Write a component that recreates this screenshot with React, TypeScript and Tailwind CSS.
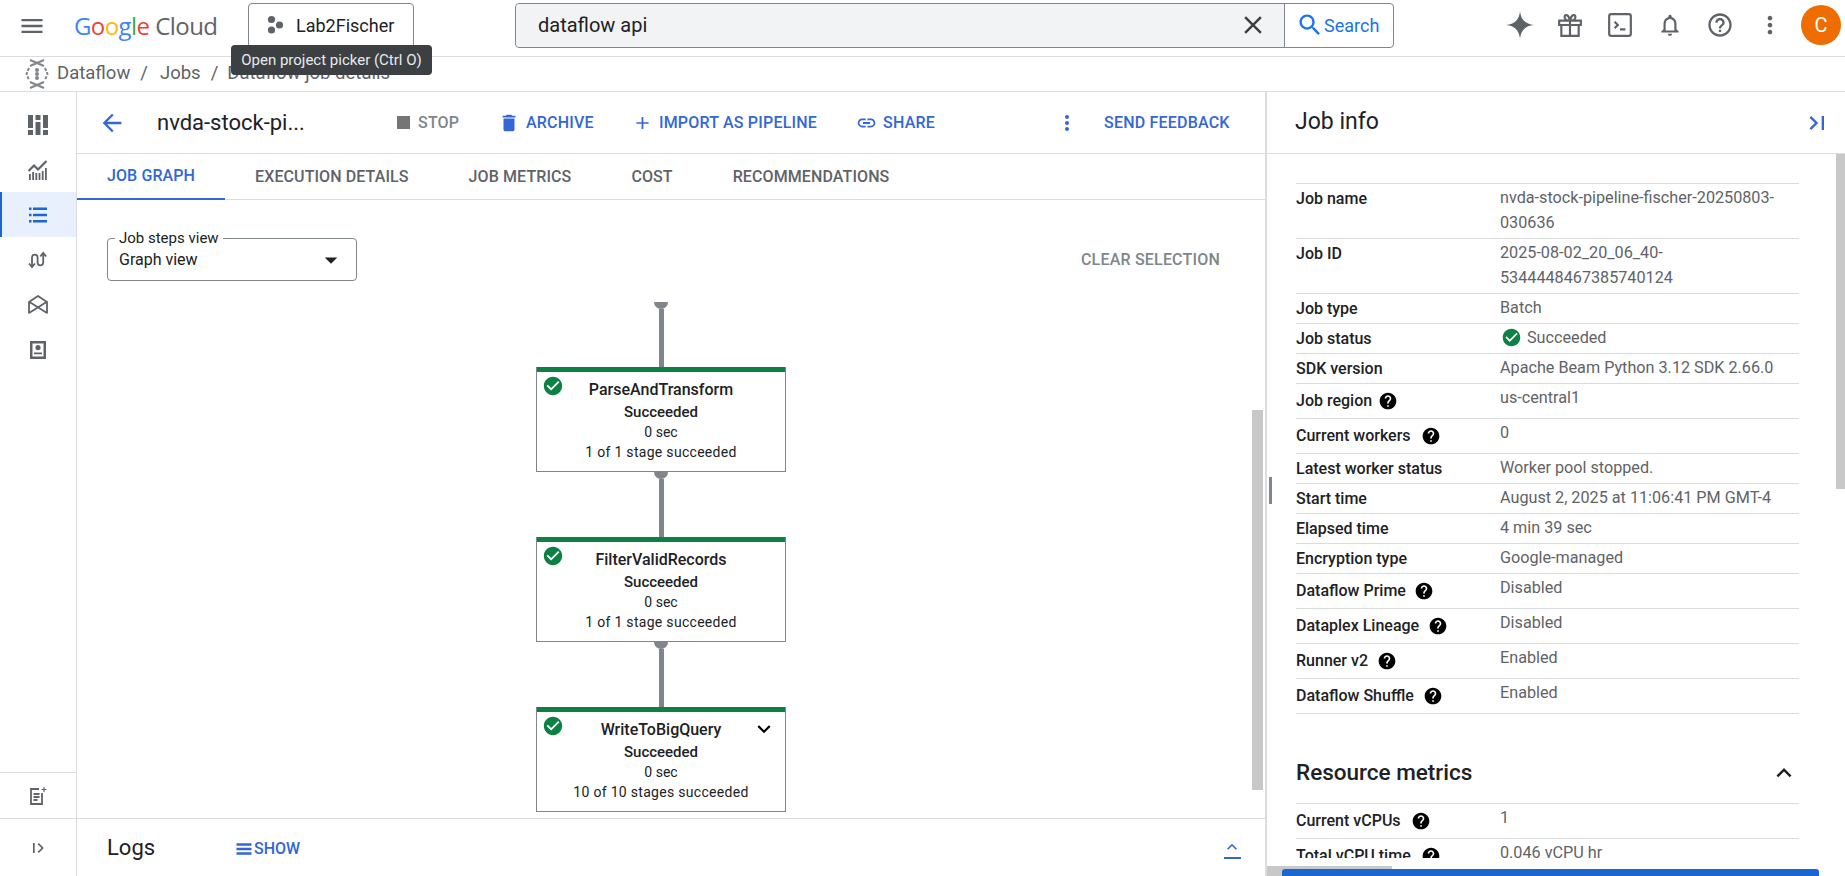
import React from "react";

const GRAY = "#5f6368";
const BLUE = "#3367d6";

type IconProps = { d: string; className?: string; fill?: string };

const Icon = ({ d, className = "w-6 h-6", fill = "currentColor" }: IconProps) => (
  <svg viewBox="0 0 24 24" className={className} fill={fill}>
    <path d={d} />
  </svg>
);

const paths = {
  menu: "M3 18h18v-2H3v2zm0-5h18v-2H3v2zm0-7v2h18V6H3z",
  back: "M20 11H7.83l5.59-5.59L12 4l-8 8 8 8 1.41-1.41L7.83 13H20v-2z",
  trash: "M6 19c0 1.1.9 2 2 2h8c1.1 0 2-.9 2-2V7H6v12zM19 4h-3.5l-1-1h-5l-1 1H5v2h14V4z",
  add: "M19 13h-6v6h-2v-6H5v-2h6V5h2v6h6v2z",
  link: "M3.9 12c0-1.71 1.39-3.1 3.1-3.1h4V7H7c-2.76 0-5 2.24-5 5s2.24 5 5 5h4v-1.9H7c-1.71 0-3.1-1.39-3.1-3.1zM8 13h8v-2H8v2zm9-6h-4v1.9h4c1.71 0 3.1 1.39 3.1 3.1s-1.39 3.1-3.1 3.1h-4V17h4c2.76 0 5-2.24 5-5s-2.24-5-5-5z",
  dots: "M12 8c1.1 0 2-.9 2-2s-.9-2-2-2-2 .9-2 2 .9 2 2 2zm0 2c-1.1 0-2 .9-2 2s.9 2 2 2 2-.9 2-2-.9-2-2-2zm0 6c-1.1 0-2 .9-2 2s.9 2 2 2 2-.9 2-2-.9-2-2-2z",
  close: "M19 6.41 17.59 5 12 10.59 6.41 5 5 6.41 10.59 12 5 17.59 6.41 19 12 13.41 17.59 19 19 17.59 13.41 12z",
  search: "M15.5 14h-.79l-.28-.27C15.41 12.59 16 11.11 16 9.5 16 5.91 13.09 3 9.5 3S3 5.91 3 9.5 5.91 16 9.5 16c1.61 0 3.09-.59 4.23-1.57l.27.28v.79l5 4.99L20.49 19l-4.99-5zm-6 0C7.01 14 5 11.99 5 9.5S7.01 5 9.5 5 14 7.01 14 9.5 11.99 14 9.5 14z",
  check: "M12 2C6.48 2 2 6.48 2 12s4.48 10 10 10 10-4.48 10-10S17.52 2 12 2zm-2 15l-5-5 1.41-1.41L10 14.17l7.59-7.59L19 8l-9 9z",
  help: "M12 2C6.48 2 2 6.48 2 12s4.48 10 10 10 10-4.48 10-10S17.52 2 12 2zm1 17h-2v-2h2v2zm2.07-7.75l-.9.92C13.45 12.9 13 13.5 13 15h-2v-.5c0-1.1.45-2.1 1.17-2.83l1.24-1.26c.37-.36.59-.86.59-1.41 0-1.1-.9-2-2-2s-2 .9-2 2H8c0-2.21 1.79-4 4-4s4 1.79 4 4c0 .88-.36 1.68-.93 2.25z",
  helpOutline: "M11 18h2v-2h-2v2zm1-16C6.48 2 2 6.48 2 12s4.48 10 10 10 10-4.48 10-10S17.52 2 12 2zm0 18c-4.41 0-8-3.59-8-8s3.59-8 8-8 8 3.59 8 8-3.59 8-8 8zm0-14c-2.21 0-4 1.79-4 4h2c0-1.1.9-2 2-2s2 .9 2 2c0 2-3 1.75-3 5h2c0-2.25 3-2.5 3-5 0-2.21-1.79-4-4-4z",
  bell: "M12 22c1.1 0 2-.9 2-2h-4c0 1.1.9 2 2 2zm6-6v-5c0-3.07-1.63-5.64-4.5-6.32V4c0-.83-.67-1.5-1.5-1.5s-1.5.67-1.5 1.5v.68C7.64 5.36 6 7.92 6 11v5l-2 2v1h16v-1l-2-2zm-2 1H8v-6c0-2.48 1.51-4.5 4-4.5s4 2.02 4 4.5v6z",
  sparkle: "M12 1C12.6 7.6 16.4 11.4 23 12 16.4 12.6 12.6 16.4 12 23 11.4 16.4 7.6 12.6 1 12 7.6 11.4 11.4 7.6 12 1Z",
  less: "M12 8l-6 6 1.41 1.41L12 10.83l4.59 4.58L18 14z",
  more: "M16.59 8.59 12 13.17 7.41 8.59 6 10l6 6 6-6z",
  caret: "M7 10l5 5 5-5z",
  lastPage: "M5.59 7.41 10.18 12l-4.59 4.59L7 18l6-6-6-6zM16 6h2v12h-2z",
  expandRail: "M6 6h2v12H6zM11.59 7.41 16.18 12l-4.59 4.59L13 18l6-6-6-6z",
  lines: "M3 5h18v3H3zM3 10.5h18v3H3zM3 16h18v3H3z",
};

const RailIcon = ({ name }: { name: string }) => {
  if (name === "dash")
    return (
      <svg viewBox="0 0 20 20" className="w-5 h-5" fill={GRAY}>
        <path d="M0 0h5v13H0zM0 15h5v5H0zM7.5 0h5v5h-5zM7.5 7h5v13h-5zM15 0h5v13h-5zM15 15h5v5h-5z" />
      </svg>
    );
  if (name === "chart")
    return (
      <svg viewBox="0 0 20 20" className="w-5 h-5" fill={GRAY}>
        <path d="M1 14h1.800v6H1zM4.200 12h1.800v8H4.200zM7.400 13h1.800v7H7.400zM10.600 13h1.800v7h-1.800zM13.800 11h1.800v9h-1.800zM17 8h1.800v12H17z" />
        <path d="M0.500 11 6 5.500 10 9.500 18.500 1" fill="none" stroke={GRAY} strokeWidth="2.200" />
      </svg>
    );
  if (name === "list")
    return (
      <svg viewBox="0 0 20 20" className="w-5 h-5" fill="#1a67d2">
        <path d="M1 2.500h2.500V5H1zM5 2.500h14V5H5zM1 8.800h2.500v2.500H1zM5 8.800h14v2.500H5zM1 15h2.500v2.500H1zM5 15h14v2.500H5z" />
      </svg>
    );
  if (name === "flow")
    return (
      <svg viewBox="0 0 20 20" className="w-5 h-5" fill="none" stroke={GRAY} strokeWidth="1.800">
        <path d="M4 16V7.500a2.800 2.800 0 0 1 5.600 0v5a2.800 2.800 0 0 0 5.600 0V4" />
        <path d="M1 13.500 4 17l3-3.500M12.200 6.500 15.200 3l3 3.500" />
      </svg>
    );
  if (name === "env")
    return (
      <svg viewBox="0 0 20 20" className="w-5 h-5" fill="none" stroke={GRAY} strokeWidth="1.800">
        <path d="M1 18.500V7l9-6 9 6v11.500M1.500 7 19 18M18.500 7 1 18" />
      </svg>
    );
  if (name === "badge")
    return (
      <svg viewBox="0 0 20 20" className="w-5 h-5" fill={GRAY}>
        <path d="M2 1h16v18H2zM4.500 3.500v13h11v-13z" fillRule="evenodd" />
        <path d="M10 5a2.600 2.600 0 1 1 0 5.200 2.600 2.600 0 0 1 0-5.200zM6 12.500h8v1.800H6z" />
      </svg>
    );
  return (
    <svg viewBox="0 0 20 20" className="w-5 h-5" fill="none" stroke={GRAY} strokeWidth="1.800">
      <path d="M14 7v11H3V3h8" />
      <path d="M5.500 8h6M5.500 11h6M5.500 14h4" />
      <path d="M16 1v5M13.500 3.500h5" strokeWidth="1.200" />
    </svg>
  );
};

const Rail = () => (
  <div className="w-[77px] shrink-0 border-r border-[#dadce0] flex flex-col">
    <div className="flex-1 pt-[10px]">
      {["dash", "chart", "list", "flow", "env", "badge"].map((name) => (
        <div
          key={name}
          className={
            name === "list"
              ? "h-[45px] flex items-center justify-center bg-[#e8f0fe] border-l-2 border-[#1a67d2] pr-[3px]"
              : "h-[45px] flex items-center justify-center pr-[1px]"
          }
        >
          <RailIcon name={name} />
        </div>
      ))}
    </div>
    <div className="h-[46px] border-t border-[#dadce0] flex items-center justify-center pr-[1px]">
      <RailIcon name="doc" />
    </div>
    <div className="h-[58px] border-t border-[#dadce0] flex items-center justify-center pr-[1px] text-[#5f6368]">
      <Icon d={paths.expandRail} className="w-5 h-5" />
    </div>
  </div>
);

const Header = () => (
  <div className="h-[57px] shrink-0 border-b border-[#dadce0] flex items-center text-[#5f6368]">
    <div className="ml-[18px] w-[28px] h-[28px] mb-[4px]">
      <Icon d={paths.menu} className="w-[28px] h-[28px]" fill="#5f6368" />
    </div>
    <div className="ml-[28px] w-[174px] text-[24px] leading-none tracking-[-0.6px] font-['Open_Sans',sans-serif] whitespace-nowrap mb-[4px]">
      <span className="text-[#4285f4]">G</span>
      <span className="text-[#ea4335]">o</span>
      <span className="text-[#fbbc05]">o</span>
      <span className="text-[#4285f4]">g</span>
      <span className="text-[#34a853]">l</span>
      <span className="text-[#ea4335]">e</span>
      <span className="text-[#5f6368] ml-[6px]">Cloud</span>
    </div>
    <div className="w-[166px] h-[45px] mb-[6px] border border-[#80868b] rounded-[4px] flex items-center pl-[16px] text-[#202124]">
      <svg viewBox="0 0 20 20" className="w-5 h-5" fill="#5f6368">
        <circle cx="6.500" cy="4.500" r="3.600" />
        <circle cx="6.500" cy="15" r="3.600" />
        <circle cx="14.500" cy="10" r="3.600" />
      </svg>
      <span className="ml-[11px] text-[18px]">Lab2Fischer</span>
    </div>
    <div className="ml-[101px] w-[879px] h-[45px] mb-[6px] border border-[#80868b] rounded-[4px] flex items-stretch">
      <div className="w-[768px] bg-[#f1f3f4] rounded-l-[4px] flex items-center pl-[22px] text-[20px] text-[#202124]">
        <span className="flex-1">dataflow api</span>
        <Icon d={paths.close} className="w-[30px] h-[30px] mr-[16px]" fill="#3c4043" />
      </div>
      <div className="flex-1 border-l border-[#80868b] flex items-center pl-[11px] text-[#1a73e8]">
        <Icon d={paths.search} className="w-[28px] h-[28px]" />
        <span className="text-[18px]">Search</span>
      </div>
    </div>
    <div className="ml-[113px] flex items-center mb-[6px]">
      <div className="w-[26px] flex justify-center">
        <Icon d={paths.sparkle} className="w-[30px] h-[30px] shrink-0" fill="#5f6368" />
      </div>
      <div className="ml-[24px] w-[26px]">
        <svg viewBox="0 0 24 24" className="w-[26px] h-[26px]" fill="none" stroke="#5f6368" strokeWidth="2">
          <path d="M2 8h20v4H2zM4 12v10h16V12zM12 8v14M12 8C9 8 7 6.500 7 4.500 7 2 10.500 1.500 12 8c1.500-6.500 5-6 5-3.500C17 6.500 15 8 12 8z" />
        </svg>
      </div>
      <div className="ml-[24px] w-[26px]">
        <svg viewBox="0 0 24 24" className="w-[26px] h-[26px]" fill="none" stroke="#5f6368" strokeWidth="2">
          <rect x="2" y="2" width="20" height="20" rx="2" />
          <path d="M7 9l3 3-3 3M12 16h5" />
        </svg>
      </div>
      <div className="ml-[24px] w-[26px]">
        <Icon d={paths.bell} className="w-[26px] h-[26px]" fill="#5f6368" />
      </div>
      <div className="ml-[24px] w-[26px]">
        <Icon d={paths.helpOutline} className="w-[28px] h-[28px] -ml-px" fill="#5f6368" />
      </div>
      <div className="ml-[24px] w-[26px]">
        <Icon d={paths.dots} className="w-[28px] h-[28px] -ml-px" fill="#5f6368" />
      </div>
      <div className="ml-[18px] w-[40px] h-[40px] rounded-full bg-[#ef6c00] text-white text-[20px] flex items-center justify-center">
        C
      </div>
    </div>
  </div>
);

const Breadcrumb = () => (
  <div className="h-[35px] shrink-0 border-b border-[#dadce0] flex items-center pl-[25px] text-[18.5px] text-[#5f6368]">
    <svg viewBox="0 0 24 30" className="w-[24px] h-[30px]" fill="none" stroke="#80868b" strokeWidth="2">
      <path d="M5 1l14 6M19 1 5 7M5 23l14 6M19 23 5 29" />
      <path d="M4 9 1.500 15 4 21M20 9l2.500 6-2.500 6" strokeDasharray="3 1.500" />
      <circle cx="12" cy="11" r="1" />
      <circle cx="12" cy="15" r="1" />
      <circle cx="12" cy="19" r="1" />
    </svg>
    <span className="ml-[8px]">Dataflow</span>
    <span className="ml-[10px]">/</span>
    <span className="ml-[12px]">Jobs</span>
    <span className="ml-[10px]">/</span>
    <span className="ml-[9px]">Dataflow job details</span>
  </div>
);

const ToolAction = ({ d, label, size = "w-[22px] h-[22px]" }: { d: string; label: string; size?: string }) => (
  <div className="flex items-center text-[#3367d6] text-[16px] font-medium tracking-[0.2px] whitespace-nowrap">
    <Icon d={d} className={size} />
    <span className="ml-[6px]">{label}</span>
  </div>
);

const Toolbar = () => (
  <div className="h-[62px] shrink-0 border-b border-[#dadce0] flex items-center">
    <div className="ml-[21px] text-[#3367d6]">
      <Icon d={paths.back} className="w-[28px] h-[28px]" />
    </div>
    <div className="ml-[31px] w-[149px] text-[22px] text-[#202124] whitespace-nowrap">nvda-stock-pi...</div>
    <div className="ml-[91px] w-[63px] flex items-center text-[16px] font-medium tracking-[0.2px] text-[#80868b]">
      <span className="w-[13px] h-[13px] bg-[#757575]" />
      <span className="ml-[8px]">STOP</span>
    </div>
    <div className="ml-[38px] w-[96px]">
      <ToolAction d={paths.trash} label="ARCHIVE" />
    </div>
    <div className="ml-[38px] w-[185px]">
      <ToolAction d={paths.add} label="IMPORT AS PIPELINE" />
    </div>
    <div className="ml-[39px] w-[79px]">
      <ToolAction d={paths.link} label="SHARE" size="w-[26px] h-[26px]" />
    </div>
    <div className="ml-[120px] text-[#3367d6]">
      <Icon d={paths.dots} className="w-6 h-6" />
    </div>
    <div className="ml-[25px] text-[16px] font-medium tracking-[0.2px] text-[#3367d6] whitespace-nowrap">SEND FEEDBACK</div>
  </div>
);

const Tabs = () => (
  <div className="h-[46px] shrink-0 border-b border-[#dadce0] flex text-[16px] font-medium tracking-[0.1px] text-[#5f6368]">
    {["JOB GRAPH", "EXECUTION DETAILS", "JOB METRICS", "COST", "RECOMMENDATIONS"].map((tab, i) => (
      <div
        key={tab}
        className={
          i === 0
            ? "px-[30px] flex items-center text-[#3367d6] border-b-2 border-[#3367d6] h-[46px]"
            : "px-[30px] flex items-center"
        }
      >
        {tab}
      </div>
    ))}
  </div>
);

const Connector = () => (
  <div className="w-[14px] h-[65px] flex flex-col items-center">
    <div className="w-[14px] h-[7px] bg-[#80868b] rounded-b-full shrink-0" />
    <div className="w-[5px] flex-1 bg-[#80868b]" />
  </div>
);

const GraphNode = ({ title, stages, expandable }: { title: string; stages: string; expandable?: boolean }) => (
  <div className="relative w-[250px] h-[105px] border border-[#80868b] border-t-0 bg-white text-center text-[14px] text-[#202124]">
    <div className="h-[5px] bg-[#0d8043]" />
    <Icon d={paths.check} className="absolute left-[5px] top-[8px] w-[22px] h-[22px]" fill="#0d8043" />
    {expandable && <Icon d={paths.more} className="absolute right-[8px] top-[9px] w-[26px] h-[26px]" fill="#000000" />}
    <div className="mt-[6px] text-[16px] leading-[24px] font-medium">{title}</div>
    <div className="leading-[20px] font-medium text-[15px]">Succeeded</div>
    <div className="leading-[20px]">0 sec</div>
    <div className="leading-[20px] tracking-[0.3px]">{stages}</div>
  </div>
);

const Main = () => (
  <div className="w-[1188px] shrink-0 flex flex-col">
    <Toolbar />
    <Tabs />
    <div className="relative flex-1 overflow-hidden">
      <div className="pt-[38px] pl-[30px] pr-[45px] flex justify-between items-center">
        <div className="relative w-[250px] h-[43px] border border-[#80868b] rounded-[4px] flex items-center justify-between pl-[11px] pr-[10px] text-[16px] text-[#202124]">
          <span className="absolute -top-[9px] left-[7px] bg-white px-[4px] text-[15px] leading-[16px]">Job steps view</span>
          <span>Graph view</span>
          <Icon d={paths.caret} className="w-[30px] h-[30px]" fill="#202124" />
        </div>
        <span className="text-[16px] font-medium tracking-[0.2px] text-[#80868b]">CLEAR SELECTION</span>
      </div>
      <div className="mt-[21px] pr-[20px] flex flex-col items-center">
        <Connector />
        <GraphNode title="ParseAndTransform" stages="1 of 1 stage succeeded" />
        <Connector />
        <GraphNode title="FilterValidRecords" stages="1 of 1 stage succeeded" />
        <Connector />
        <GraphNode title="WriteToBigQuery" stages="10 of 10 stages succeeded" expandable />
      </div>
      <div className="absolute right-[2px] top-[210px] bottom-[28px] w-[11px] bg-[#c8c8c8]" />
    </div>
    <div className="h-[58px] shrink-0 border-t border-[#dadce0] flex items-center pl-[30px]">
      <span className="text-[22px] text-[#202124] w-[127px]">Logs</span>
      <Icon d={paths.lines} className="w-[20px] h-[20px] mt-[2px]" fill={BLUE} />
      <span className="text-[16px] font-medium text-[#3367d6] mt-[2px]">SHOW</span>
      <div className="ml-[922px] w-[20px] text-[#3367d6] flex flex-col items-center">
        <Icon d={paths.less} className="w-[26px] h-[20px] shrink-0" />
        <div className="w-[17px] h-[2px] bg-[#3367d6]" />
      </div>
    </div>
  </div>
);

type Row = { label: string; value: string; h: string; gap?: string; status?: boolean };

const jobRows: Row[] = [
  { label: "Job name", value: "nvda-stock-pipeline-fischer-20250803-030636", h: "h-[55px]" },
  { label: "Job ID", value: "2025-08-02_20_06_40-5344448467385740124", h: "h-[55px]" },
  { label: "Job type", value: "Batch", h: "h-[30px]" },
  { label: "Job status", value: "Succeeded", h: "h-[30px]", status: true },
  { label: "SDK version", value: "Apache Beam Python 3.12 SDK 2.66.0", h: "h-[30px]" },
  { label: "Job region", value: "us-central1", h: "h-[35px]", gap: "ml-[6px]" },
  { label: "Current workers", value: "0", h: "h-[35px]", gap: "ml-[10px]" },
  { label: "Latest worker status", value: "Worker pool stopped.", h: "h-[30px]" },
  { label: "Start time", value: "August 2, 2025 at 11:06:41 PM GMT-4", h: "h-[30px]" },
  { label: "Elapsed time", value: "4 min 39 sec", h: "h-[30px]" },
  { label: "Encryption type", value: "Google-managed", h: "h-[30px]" },
  { label: "Dataflow Prime", value: "Disabled", h: "h-[35px]", gap: "ml-[8px]" },
  { label: "Dataplex Lineage", value: "Disabled", h: "h-[35px]", gap: "ml-[9px]" },
  { label: "Runner v2", value: "Enabled", h: "h-[35px]", gap: "ml-[9px]" },
  { label: "Dataflow Shuffle", value: "Enabled", h: "h-[35px]", gap: "ml-[9px]" },
];

const metricRows: Row[] = [
  { label: "Current vCPUs", value: "1", h: "h-[35px]", gap: "ml-[10px]" },
  { label: "Total vCPU time", value: "0.046 vCPU hr", h: "h-[35px]", gap: "ml-[10px]" },
];

const InfoRow = ({ row }: { row: Row }) => (
  <div className={`${row.h} box-border border-b border-[#dadce0] flex text-[16px] leading-[25px]`}>
    <div className={row.gap ? "w-[204px] shrink-0 font-medium text-[#202124] flex items-center h-full pb-[1px]" : "w-[204px] shrink-0 pt-[2px] font-medium text-[#202124]"}>
      {row.label}
      {row.gap && <Icon d={paths.help} className={`${row.gap} w-5 h-5`} fill="#000000" />}
    </div>
    <div className="flex-1 pt-[1px] text-[16.2px] text-[#5f6368] pr-[10px] flex">
      {row.status && <Icon d={paths.check} className="ml-[1px] mr-[5px] mt-[2px] w-[21px] h-[21px] shrink-0" fill="#0d8043" />}
      <span>{row.value}</span>
    </div>
  </div>
);

const JobInfo = () => (
  <div className="flex-1 min-w-0 flex flex-col">
    <div className="h-[62px] shrink-0 border-b border-[#dadce0] flex items-center justify-between pl-[28px] pr-[14px]">
      <span className="text-[23px] text-[#202124]">Job info</span>
      <Icon d={paths.lastPage} className="w-[28px] h-[28px]" fill={BLUE} />
    </div>
    <div className="relative flex-1 overflow-hidden pt-[29px] pl-[29px]">
      <div className="w-[503px]">
        <div className="border-t border-[#dadce0]" />
        {jobRows.map((row) => (
          <InfoRow key={row.label} row={row} />
        ))}
        <div className="h-[90px] border-b border-[#dadce0] flex items-center justify-between pt-[28px]">
          <span className="text-[22.5px] font-medium text-[#202124]">Resource metrics</span>
          <Icon d={paths.less} className="w-[30px] h-[30px]" fill="#202124" />
        </div>
        {metricRows.map((row) => (
          <InfoRow key={row.label} row={row} />
        ))}
      </div>
      <div className="absolute right-0 top-0 w-[9px] h-[335px] bg-[#c8c8c8]" />
    </div>
    <div className="relative h-[18px] shrink-0">
      <div className="absolute left-0 bottom-0 w-[125px] h-[10px] bg-[#c8c8c8]" />
      <div className="absolute left-[15px] bottom-0 w-[537px] h-[7px] bg-[#1a67d2] rounded-t-[3px]" />
    </div>
  </div>
);

export default function App() {
  return (
    <div className="relative w-[1845px] h-[876px] overflow-hidden bg-white flex flex-col font-['Roboto',sans-serif]">
      <Header />
      <Breadcrumb />
      <div className="flex-1 min-h-0 flex">
        <Rail />
        <Main />
        <div className="relative w-[2px] shrink-0 bg-[#dadce0]">
          <div className="absolute left-[4px] top-[385px] w-[3px] h-[27px] bg-[#80868b]" />
        </div>
        <JobInfo />
      </div>
      <div className="absolute left-[231px] top-[45px] h-[30px] w-[201px] rounded-[4px] bg-[#3c4043] text-[#e8eaed] text-[15px] flex items-center justify-center whitespace-nowrap">
        Open project picker (Ctrl O)
      </div>
    </div>
  );
}
